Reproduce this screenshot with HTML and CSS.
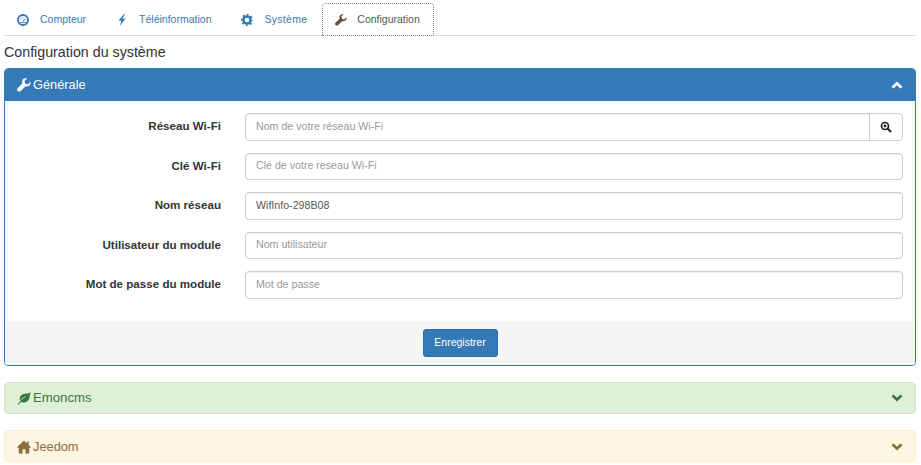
FILE: index.html
```html
<!DOCTYPE html>
<html lang="fr">
<head>
<meta charset="utf-8">
<title>Configuration</title>
<link rel="stylesheet" href="styles.css">
</head>
<body>
<ul class="tabs">
  <li class="tab">
    <svg class="tab-icon" viewBox="0 0 24 24"><circle cx="12" cy="12" r="10" fill="none" stroke="#337ab7" stroke-width="4"/><path d="M5.500 17h13M6.500 11.500h2M15.500 11.500h2M9 8h2M13 8h2" stroke="#337ab7" stroke-width="2" opacity=".8"/><path d="M10.500 14.500 L16.500 9.500 L13.500 15.500 Z" fill="#337ab7"/></svg>
    <a>Compteur</a>
  </li>
  <li class="tab">
    <svg class="tab-icon" viewBox="0 0 24 24"><path d="M16 0 L5 13.500 L11 13.500 L7.500 24 L19 9.500 L13 9.500 L18 0 Z" fill="#337ab7"/></svg>
    <a>Téléinformation</a>
  </li>
  <li class="tab tab-wide">
    <svg class="tab-icon" viewBox="0 0 24 24"><circle cx="12" cy="12" r="7.200" fill="none" stroke="#337ab7" stroke-width="5"/><circle cx="12" cy="12" r="10.500" fill="none" stroke="#337ab7" stroke-width="3.500" stroke-dasharray="3.800 4.450" stroke-dashoffset="1.900"/></svg>
    <a>Système</a>
  </li>
  <li class="tab tab-active">
    <svg class="tab-icon" viewBox="0 0 24 24"><path d="M23 6.500 18.500 11 14 9.500 12.800 5 17.300.8C14 -.4 10 1 9 4.500c-.4 1.500-.2 3 .4 4.400L1 17.500C-.3 19 0 21 1.200 22.300 2.500 23.500 4.500 23.700 6 22.500L14.800 14c3.500 1.300 7.300-.5 8.300-4 .3-1 .3-2.400-.1-3.500z" fill="#6b4f3f"/></svg>
    <a>Configuration</a>
  </li>
</ul>

<h1 class="page-title">Configuration du système</h1>

<section class="panel panel-primary">
  <header class="panel-heading">
    <span class="panel-title">
      <svg class="panel-icon" viewBox="0 0 24 24"><path d="M23 6.500 18.500 11 14 9.500 12.800 5 17.300.8C14 -.4 10 1 9 4.500c-.4 1.500-.2 3 .4 4.400L1 17.500C-.3 19 0 21 1.200 22.300 2.500 23.500 4.500 23.700 6 22.500L14.800 14c3.500 1.300 7.300-.5 8.300-4 .3-1 .3-2.400-.1-3.500z" fill="#fff"/></svg>Générale
    </span>
    <svg class="chevron" viewBox="0 0 24 16"><path d="M12 1 L23 11.500 L19 15 L12 8.500 L5 15 L1 11.500 Z" fill="#fff"/></svg>
  </header>
  <form class="panel-body">
    <div class="form-row">
      <label class="form-label">Réseau Wi-Fi</label>
      <div class="input-group">
        <input class="form-input joined" placeholder="Nom de votre réseau Wi-Fi">
        <button class="addon" type="button">
          <svg class="search-icon" viewBox="0 0 24 24"><circle cx="10" cy="10" r="7" fill="none" stroke="#222" stroke-width="3.400"/><circle cx="10" cy="10" r="2.800" fill="#222"/><path d="M15 15 L22 22" stroke="#222" stroke-width="4.200"/></svg>
        </button>
      </div>
    </div>
    <div class="form-row">
      <label class="form-label">Clé Wi-Fi</label>
      <input class="form-input" placeholder="Clé de votre reseau Wi-Fi">
    </div>
    <div class="form-row">
      <label class="form-label">Nom réseau</label>
      <input class="form-input" value="WifInfo-298B08">
    </div>
    <div class="form-row">
      <label class="form-label">Utilisateur du module</label>
      <input class="form-input" placeholder="Nom utilisateur">
    </div>
    <div class="form-row">
      <label class="form-label">Mot de passe du module</label>
      <input class="form-input" placeholder="Mot de passe">
    </div>
  </form>
  <footer class="panel-footer">
    <button class="btn-primary" type="button">Enregistrer</button>
  </footer>
</section>

<section class="panel panel-success">
  <header class="panel-heading">
    <span class="panel-title">
      <svg class="panel-icon" viewBox="0 0 24 24"><path d="M23.500 2C20 5 15 3.500 10 5.500 5 7.500 3.500 12 5 16.500 8 12.500 12 10 16 9 11 12 6.500 15.500 1 22.500L3 23.500C4 22 5 20.500 6.500 19 12 21 18 19 20.500 14 22.500 10 22 6 23.500 2Z" fill="#3c763d"/></svg>Emoncms
    </span>
    <svg class="chevron" viewBox="0 0 24 16"><path d="M12 15 L23 4.500 L19 1 L12 7.500 L5 1 L1 4.500 Z" fill="#3c763d"/></svg>
  </header>
</section>

<section class="panel panel-warning">
  <header class="panel-heading">
    <span class="panel-title">
      <svg class="panel-icon" viewBox="0 0 24 24"><path d="M12 1 L17 5.500 L17 2.500 L20 2.500 L20 8.500 L24 12.500 L21 13.500 L21 23 L14.500 23 L14.500 16 L9.500 16 L9.500 23 L3 23 L3 13.500 L0 12.500 Z" fill="#8a6d3b"/></svg>Jeedom
    </span>
    <svg class="chevron" viewBox="0 0 24 16"><path d="M12 15 L23 4.500 L19 1 L12 7.500 L5 1 L1 4.500 Z" fill="#8a6d3b"/></svg>
  </header>
</section>
</body>
</html>
```
FILE: styles.css
```css
* { box-sizing: border-box; }
html, body { height: 100%; }
body {
  margin: 0;
  padding: 3px 5px 0 4px;
  font-family: "Liberation Sans", Arial, sans-serif;
  font-size: 10.5px;
  line-height: 1.43;
  color: #333;
  background: #fff;
  overflow: hidden;
}
.tabs {
  display: flex;
  margin: 0;
  padding: 0;
  list-style: none;
  height: 33px;
  border-bottom: 1px solid #ddd;
}
.tab {
  display: flex;
  align-items: center;
  height: 33px;
  margin-right: 4px;
  padding: 0 12px;
  border: 1px solid transparent;
  border-radius: 4px 4px 0 0;
  color: #337ab7;
}
.tab-wide { margin-right: 2px; letter-spacing: .28px; }
.tab-active {
  border: 1px dotted #888;
  background: #fff;
  color: #555;
}
.tab-icon { width: 12px; height: 12px; margin-right: 11px; flex: none; }
.tab-active .tab-icon { margin-right: 10px; }
.tab-active a { margin-right: 1px; }
.page-title {
  margin: 7px 0 7px;
  font-size: 14.25px;
  font-weight: 400;
  line-height: 18px;
  color: #333;
}
.panel {
  margin-bottom: 16px;
  border: 1px solid transparent;
  border-radius: 4px;
  background: #fff;
  overflow: hidden;
}
.panel-primary { border-color: #337ab7; }
.panel-success { border-color: #d6e9c6; }
.panel-warning { border-color: #faebcc; }
.panel-heading {
  display: flex;
  align-items: center;
  justify-content: space-between;
  height: 32px;
  padding: 0 12px;
}
.panel-primary .panel-heading { background: #337ab7; color: #fff; }
.panel-success .panel-heading { height: 30px; padding-top: 1px; background: #dff0d8; color: #3c763d; }
.panel-warning .panel-heading { height: 30px; padding-top: 3px; background: #fdf6e2; color: #8a6d3b; }
.panel-title { display: flex; align-items: center; font-size: 12.8px; }
.panel-success .panel-title { font-size: 13.2px; }
.panel-icon { width: 14px; height: 14px; margin-right: 2px; flex: none; }
.chevron { width: 12px; height: 8px; flex: none; }
.panel-body {
  display: flex;
  flex-direction: column;
  gap: 12px;
  padding: 12px 12px 22px 0;
}
.form-row { display: flex; align-items: center; height: 27.5px; }
.form-label {
  flex: none;
  width: 216px;
  margin-right: 24px;
  text-align: right;
  font-size: 11.6px;
  font-weight: 700;
}
.form-input {
  flex: 1;
  min-width: 0;
  height: 27.5px;
  padding: 0 10px 2px;
  border: 1px solid #ccc;
  border-radius: 4px;
  font: inherit;
  font-size: 10.65px;
  color: #555;
  background: #fff;
  box-shadow: inset 0 1px 1px rgba(0, 0, 0, .075);
}
.form-input::placeholder { color: #999; opacity: 1; }
.input-group { flex: 1; display: flex; min-width: 0; height: 27.5px; }
.joined { border-radius: 4px 0 0 4px; }
.addon {
  flex: none;
  width: 34px;
  margin-left: -1px;
  padding: 0;
  display: flex;
  align-items: center;
  justify-content: center;
  border: 1px solid #ccc;
  border-radius: 0 4px 4px 0;
  background: #fff;
}
.search-icon { width: 12px; height: 12px; }
.panel-footer {
  display: flex;
  justify-content: center;
  height: 44px;
  padding-top: 8px;
  background: #f5f5f5;
}
.btn-primary {
  height: 28px;
  width: 75px;
  padding: 0;
  border: 1px solid #2e6da4;
  border-radius: 3px;
  background: #337ab7;
  color: #fff;
  font: inherit;
}
```
